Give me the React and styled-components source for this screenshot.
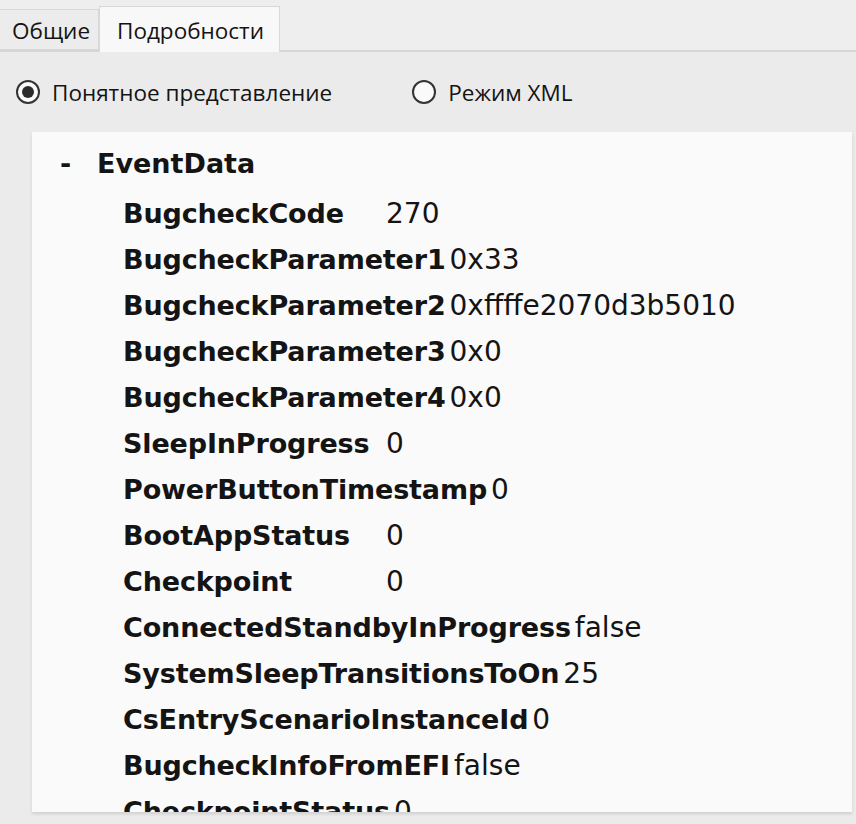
import React from "react";
import styled, { createGlobalStyle } from "styled-components";

const Global = createGlobalStyle`
  html, body { margin: 0; padding: 0; background: #ececec; }
  body { font-family: "Open Sans", "Noto Sans", sans-serif; color: #141414; }
`;

const Window = styled.div`
  width: 856px;
  height: 824px;
  overflow: hidden;
  background: #ebebeb;
  display: flex;
  flex-direction: column;
`;

const TabStrip = styled.div`
  display: flex;
  align-items: flex-end;
  height: 52px;
  border-bottom: 2px solid #d6d6d6;
  background: #eeeeee;
  box-sizing: border-box;
`;

const Tab = styled.div`
  font-size: 22.5px;
  box-sizing: border-box;
  height: ${(p) => (p.$active ? "46px" : "41px")};
  margin-bottom: ${(p) => (p.$active ? "-2px" : "0")};
  padding: ${(p) => (p.$active ? "2px 15px 0 17px" : "2px 8px 0 12px")};
  display: flex;
  align-items: center;
  background: ${(p) => (p.$active ? "#f8f8f8" : "#ececec")};
  border: 1px solid #d8d8d8;
  border-bottom: ${(p) => (p.$active ? "none" : "1px solid #d8d8d8")};
  border-left: ${(p) => (p.$active ? "1px solid #d8d8d8" : "none")};
  z-index: ${(p) => (p.$active ? 1 : 0)};
`;

const RadioRow = styled.div`
  display: flex;
  align-items: center;
  height: 80px;
  padding-left: 16px;
`;

const RadioItem = styled.label`
  display: flex;
  align-items: center;
  gap: 12px;
  font-size: 22.5px;
  margin-right: ${(p) => p.$gap || 0}px;
`;

const RadioCircle = styled.span`
  width: 24px;
  height: 24px;
  border-radius: 50%;
  border: 2px solid #333;
  box-sizing: border-box;
  display: flex;
  align-items: center;
  justify-content: center;
  background: #fafafa;
  &::after {
    content: "";
    width: 12px;
    height: 12px;
    border-radius: 50%;
    background: ${(p) => (p.$checked ? "#2b2b2b" : "transparent")};
  }
`;

const Panel = styled.div`
  margin: 0 4px 0 32px;
  background: #fafafa;
  height: 680px;
  padding-top: 8px;
  box-sizing: border-box;
  overflow: hidden;
  box-shadow: 0 2px 3px rgba(0, 0, 0, 0.12);
  font-family: "DejaVu Sans", "Open Sans", sans-serif;
`;

const GroupHead = styled.div`
  display: flex;
  align-items: center;
  height: 46px;
  margin-bottom: 4px;
  font-size: 27px;
  font-weight: 700;
  padding-left: 28px;
`;

const Dash = styled.span`
  width: 37px;
`;

const Row = styled.div`
  display: flex;
  align-items: center;
  height: 46px;
  padding-left: 91px;
  font-size: 27px;
  white-space: nowrap;
`;

const Key = styled.span`
  font-weight: 700;
  min-width: 259px;
  padding-right: 4px;
  letter-spacing: -0.15px;
`;

const Value = styled.span`
  font-weight: 400;
  font-size: 28px;
`;

const rows = [
  ["BugcheckCode", "270"],
  ["BugcheckParameter1", "0x33"],
  ["BugcheckParameter2", "0xffffe2070d3b5010"],
  ["BugcheckParameter3", "0x0"],
  ["BugcheckParameter4", "0x0"],
  ["SleepInProgress", "0"],
  ["PowerButtonTimestamp", "0"],
  ["BootAppStatus", "0"],
  ["Checkpoint", "0"],
  ["ConnectedStandbyInProgress", "false"],
  ["SystemSleepTransitionsToOn", "25"],
  ["CsEntryScenarioInstanceId", "0"],
  ["BugcheckInfoFromEFI", "false"],
  ["CheckpointStatus", "0"],
];

export default function App() {
  return (
    <Window>
      <Global />
      <TabStrip>
        <Tab>Общие</Tab>
        <Tab $active>Подробности</Tab>
      </TabStrip>
      <RadioRow>
        <RadioItem $gap={80}>
          <RadioCircle $checked />
          Понятное представление
        </RadioItem>
        <RadioItem>
          <RadioCircle />
          Режим XML
        </RadioItem>
      </RadioRow>
      <Panel>
        <GroupHead>
          <Dash>-</Dash>
          EventData
        </GroupHead>
        {rows.map(([k, v]) => (
          <Row key={k}>
            <Key>{k}</Key>
            <Value>{v}</Value>
          </Row>
        ))}
      </Panel>
    </Window>
  );
}
